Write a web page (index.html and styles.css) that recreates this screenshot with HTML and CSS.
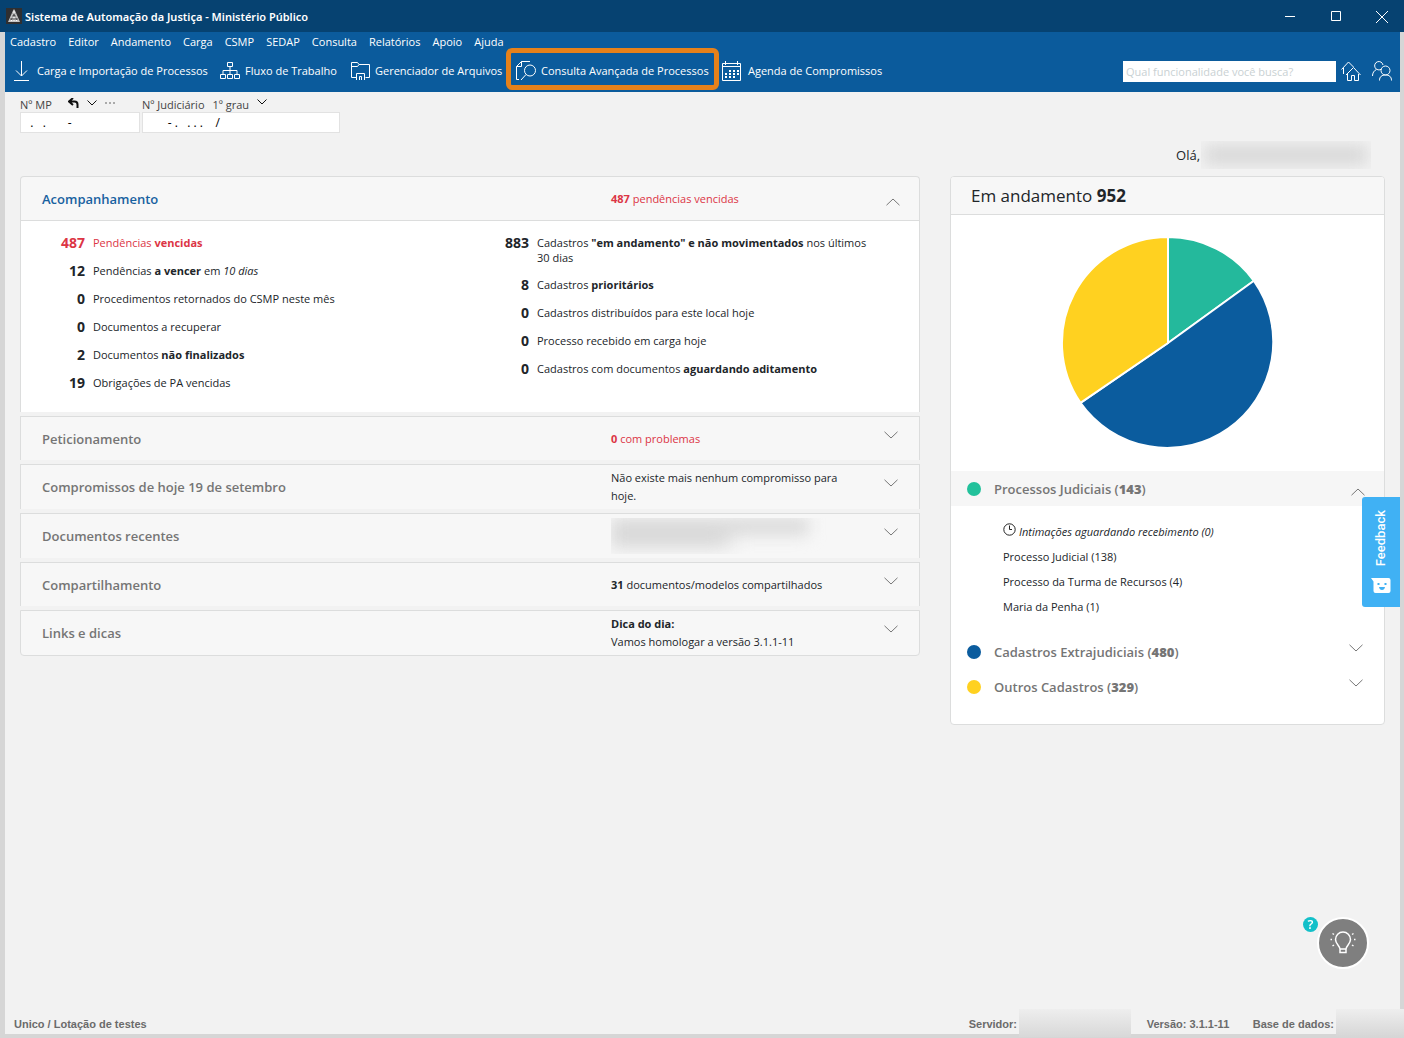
FILE: index.html
```html
<!DOCTYPE html>
<html lang="pt-BR">
<head>
<meta charset="utf-8">
<meta name="viewport" content="width=device-width, initial-scale=1">
<title>Sistema de Automação da Justiça - Ministério Público</title>
<link rel="stylesheet" href="styles.css">
</head>
<body>
<svg class="defs" aria-hidden="true">
  <symbol id="down" viewBox="0 0 14 8"><path d="M.5.8 7 7 13.500.8"/></symbol>
  <symbol id="up" viewBox="0 0 14 8"><path d="M.5 7.200 7 1l6.500 6.200"/></symbol>
</svg>

<header class="titlebar">
  <svg class="logo" viewBox="0 0 16 16" aria-hidden="true">
    <rect width="16" height="16" fill="#2f2f31"/>
    <path d="M7.500 1.500 2 14h12L8.500 1.500z" fill="#c4c4c4"/>
    <path d="M7 5l4 7M9 5l-4 7M6 8h4M4 11h8" stroke="#2f2f31" stroke-width=".7" fill="none"/>
    <path d="M8 3v3M7 8.500v1.500M9 8.500v1.500M5 12.500h1M10 12.500h1M7.500 12.500h1" stroke="#fff" fill="none"/>
  </svg>
  <h1 class="app-name">Sistema de Automação da Justiça - Ministério Público</h1>
  <div class="window-buttons">
    <button type="button" aria-label="Minimizar"><svg viewBox="0 0 12 12"><path d="M1 6.500h10"/></svg></button>
    <button type="button" aria-label="Maximizar"><svg viewBox="0 0 12 12"><path d="M1.500 1.500h9v9h-9z"/></svg></button>
    <button type="button" aria-label="Fechar"><svg viewBox="0 0 12 12"><path d="m0 1 12 12M12 1 0 13"/></svg></button>
  </div>
</header>

<div class="frame">
  <div class="ribbon">
    <nav class="menu" aria-label="Menu principal">
      <a href="#">Cadastro</a><a href="#">Editor</a><a href="#">Andamento</a><a href="#">Carga</a><a href="#">CSMP</a><a href="#">SEDAP</a><a href="#">Consulta</a><a href="#">Relatórios</a><a href="#">Apoio</a><a href="#">Ajuda</a>
    </nav>
    <div class="toolbar">
      <div class="tools">
        <button type="button" class="tool"><svg width="16" height="20" viewBox="0 0 16 20"><path d="M7.500 0v15M2 9.500 7.500 15 13 9.500M0 19.500h15"/></svg><span>Carga e Importação de Processos</span></button>
        <button type="button" class="tool tool-tight"><svg width="20" height="18" viewBox="0 0 20 18"><path d="M7.500.5h5v4h-5zM.5 12.500h5v4h-5zM7.500 12.500h5v4h-5zM14.500 12.500h5v4h-5zM10 4.500v8M3 12.500v-4h14v4"/></svg><span>Fluxo de Trabalho</span></button>
        <button type="button" class="tool tool-tight"><svg width="19" height="19" viewBox="0 0 19 19"><path d="M5.500 15.500h-5V.5h6l1.500 2h10.500v13h-4M.5 4.500h6l1.500-2M5.500 18V11.500h8V18M8.500 18v-3.500h2V18"/></svg><span>Gerenciador de Arquivos</span></button>
        <button type="button" class="tool tool-marked"><svg width="21" height="20" viewBox="0 0 21 20"><path d="M3 18.500H.500V5.500l5-5H14M5.500.5v5h-5"/><circle cx="14" cy="9.500" r="5.500"/><path d="m10 13.500-5 5.500"/></svg><span>Consulta Avançada de Processos</span></button>
        <button type="button" class="tool"><svg width="19" height="20" viewBox="0 0 19 20"><path d="M.5 2.500h18v17H.500zM.5 5.500h18M3.500 0v4M15.500 0v4"/><path d="M7 10h10M3 13h14M3 16h10" stroke-width="2" stroke-dasharray="2 2"/></svg><span>Agenda de Compromissos</span></button>
      </div>
      <div class="search">
        <input type="search" aria-label="Buscar funcionalidade" placeholder="Qual funcionalidade você busca?">
        <button type="button" aria-label="Início"><svg width="20" height="20" viewBox="0 0 20 20"><path d="M2.500 13V7M.5 8.500l7-7.500 5 5M5 14l7.500-7.500 7 7.500M6.500 13v6.500h4v-5h3v5h4V13"/></svg></button>
        <button type="button" aria-label="Usuários"><svg width="20" height="20" viewBox="0 0 20 20"><path d="M9.500 8A4.200 4.200 0 1 1 11 4M.5 15c0-3 1.500-5.500 4-6.500M7.500 19.500c0-4 2.500-5.500 6-5.500s6 1.500 6 5.500"/><circle cx="13.500" cy="9.500" r="4.500"/></svg></button>
      </div>
    </div>
  </div>

  <main class="content">
    <form class="lookup">
      <div class="field field-mp">
        <div class="field-head">
          <label for="mp">Nº MP</label>
          <span class="field-tools">
            <svg width="11" height="10" viewBox="0 0 11 10" class="ink heavy"><path d="M5 0 1 3.500 5 7M1 3.500h5.500q3 0 3 3V10"/></svg>
            <svg width="10" height="6" viewBox="0 0 10 6" class="ink"><path d="m.5.5 4.500 4.500L9.500.5"/></svg>
            <svg width="11" height="3" viewBox="0 0 11 3" fill="#aaa"><path d="M0 1h2v2H0zM4 1h2v2H4zM8 1h2v2H8z"/></svg>
          </span>
        </div>
        <input id="mp" type="text" value="  .   .       -">
      </div>
      <div class="field field-jud">
        <div class="field-head">
          <label for="jud">Nº Judiciário</label>
          <button type="button" class="degree">1º grau <svg width="10" height="6" viewBox="0 0 10 6" class="ink"><path d="m.5.5 4.500 4.500L9.500.5"/></svg></button>
        </div>
        <input id="jud" type="text" value="       - .   . . .    /">
      </div>
    </form>

    <p class="greeting">Olá,<span class="redacted redacted-name"></span></p>

    <div class="panels">
      <div class="accordion">
        <section class="item open">
          <header class="item-head">
            <h2>Acompanhamento</h2>
            <p class="alert"><b>487</b> pendências vencidas</p>
            <button type="button" class="toggle" aria-label="Recolher"><svg><use href="#up"/></svg></button>
          </header>
          <div class="item-body">
            <ul class="counts">
              <li class="alert"><b class="num">487</b><span>Pendências <b>vencidas</b></span></li>
              <li><b class="num">12</b><span>Pendências <b>a vencer</b> em <i>10 dias</i></span></li>
              <li><b class="num">0</b><span>Procedimentos retornados do CSMP neste mês</span></li>
              <li><b class="num">0</b><span>Documentos a recuperar</span></li>
              <li><b class="num">2</b><span>Documentos <b>não finalizados</b></span></li>
              <li><b class="num">19</b><span>Obrigações de PA vencidas</span></li>
            </ul>
            <ul class="counts">
              <li><b class="num">883</b><span>Cadastros <b>"em andamento" e não movimentados</b> nos últimos 30 dias</span></li>
              <li><b class="num">8</b><span>Cadastros <b>prioritários</b></span></li>
              <li><b class="num">0</b><span>Cadastros distribuídos para este local hoje</span></li>
              <li><b class="num">0</b><span>Processo recebido em carga hoje</span></li>
              <li><b class="num">0</b><span>Cadastros com documentos <b>aguardando aditamento</b></span></li>
            </ul>
          </div>
        </section>
        <section class="item"><header class="item-head">
          <h2>Peticionamento</h2><p class="alert"><b>0</b> com problemas</p>
          <button type="button" class="toggle" aria-label="Expandir"><svg><use href="#down"/></svg></button>
        </header></section>
        <section class="item"><header class="item-head">
          <h2>Compromissos de hoje 19 de setembro</h2><p>Não existe mais nenhum compromisso para hoje.</p>
          <button type="button" class="toggle" aria-label="Expandir"><svg><use href="#down"/></svg></button>
        </header></section>
        <section class="item"><header class="item-head">
          <h2>Documentos recentes</h2><p><span class="redacted redacted-docs"></span></p>
          <button type="button" class="toggle" aria-label="Expandir"><svg><use href="#down"/></svg></button>
        </header></section>
        <section class="item"><header class="item-head">
          <h2>Compartilhamento</h2><p><b>31</b> documentos/modelos compartilhados</p>
          <button type="button" class="toggle" aria-label="Expandir"><svg><use href="#down"/></svg></button>
        </header></section>
        <section class="item"><header class="item-head">
          <h2>Links e dicas</h2><p><b>Dica do dia:</b><br>Vamos homologar a versão 3.1.1-11</p>
          <button type="button" class="toggle" aria-label="Expandir"><svg><use href="#down"/></svg></button>
        </header></section>
      </div>

      <aside class="progress">
        <h2>Em andamento <b>952</b></h2>
        <svg class="pie" viewBox="-107 -107 214 214" role="img" aria-label="Distribuição dos cadastros em andamento">
          <path fill="#24b99c" d="M0 0V-106A106 106 0 0 1 85.900-62.200z"/>
          <path fill="#0b5c9e" d="M0 0 85.900-62.200A106 106 0 1 1-87.500 59.900z"/>
          <path fill="#ffd120" d="M0 0-87.500 59.900A106 106 0 0 1 0-106z"/>
        </svg>
        <section class="group open">
          <h3 class="green">Processos Judiciais (<b>143</b>)</h3>
          <button type="button" class="toggle" aria-label="Recolher"><svg><use href="#up"/></svg></button>
        </section>
        <ul class="links">
          <li><a href="#"><svg class="clock" viewBox="0 0 13 13"><circle cx="6.500" cy="6.500" r="5.700"/><path d="M6.500 2.500v4H9"/></svg><i>Intimações aguardando recebimento (0)</i></a></li>
          <li><a href="#">Processo Judicial (138)</a></li>
          <li><a href="#">Processo da Turma de Recursos (4)</a></li>
          <li><a href="#">Maria da Penha (1)</a></li>
        </ul>
        <section class="group">
          <h3 class="blue">Cadastros Extrajudiciais (<b>480</b>)</h3>
          <button type="button" class="toggle" aria-label="Expandir"><svg><use href="#down"/></svg></button>
        </section>
        <section class="group">
          <h3 class="yellow">Outros Cadastros (<b>329</b>)</h3>
          <button type="button" class="toggle" aria-label="Expandir"><svg><use href="#down"/></svg></button>
        </section>
      </aside>
    </div>
  </main>

  <footer class="status">
    <span class="unit">Unico / Lotação de testes</span>
    <span class="server">Servidor:<span class="redacted redacted-server"></span></span>
    <span class="version">Versão: 3.1.1-11</span>
    <span>Base de dados:<span class="redacted redacted-db"></span></span>
  </footer>
</div>

<button type="button" class="feedback"><span>Feedback</span>
  <svg width="20" height="15" viewBox="0 0 20 15"><path fill="#fff" d="M0 0h17.500q2 0 2 2v11q0 2-2 2h-13q-2 0-2-2V3.500z"/><path fill="#40b1f4" d="M6.500 5h2v2h-2zM13.500 5h2v2h-2zM8 9h6q-.5 3-3 3t-3-3z"/></svg>
</button>
<div class="tips">
  <button type="button" class="bulb" aria-label="Dicas"><svg width="26" height="26" viewBox="0 0 26 26"><path d="M10 19c0-3-4.500-5-4.500-9.500a7.500 7.500 0 0 1 15 0c0 4.500-4.500 6.500-4.500 9.500zM10 19v3.500h6V19"/><path d="M2.500 3.500 4 4.500M.500 9.500H2M2.500 16 4 15M23.500 3.500 22 4.500M25.500 9.500H24M23.500 16 22 15"/></svg></button>
  <span class="help">?</span>
</div>
</body>
</html>
```
FILE: styles.css
```css
* { box-sizing: border-box; }

body {
  margin: 0;
  min-height: 100vh;
  display: flex;
  flex-direction: column;
  font: 11px/18px "Open Sans", "Noto Sans", sans-serif;
  color: #212529;
  background: #f2f2f2;
}

h1, h2, h3, p, ul { margin: 0; padding: 0; }
ul { list-style: none; }
a { color: inherit; text-decoration: none; }
button { font: inherit; color: inherit; background: none; border: 0; padding: 0; cursor: pointer; }
svg { display: block; flex: none; }
.defs { position: absolute; width: 0; height: 0; }

/* Title bar */
.titlebar {
  display: flex;
  align-items: center;
  height: 32px;
  padding: 0 16px 0 6px;
  gap: 3px;
  background: #064271;
  color: #fff;
}
.logo { width: 16px; height: 16px; }
.app-name { flex: 1; font: 600 11px/18px "Noto Sans", sans-serif; padding-top: 2px; }
.window-buttons { display: flex; gap: 34px; }
.window-buttons svg { width: 12px; height: 12px; fill: none; stroke: #fff; overflow: visible; }

.frame {
  flex: 1;
  display: flex;
  flex-direction: column;
  border: solid #d6d6d6;
  border-width: 0 4px 4px 5px;
}

/* Menu and toolbar */
.ribbon { height: 60px; background: #0b5b9c; color: #fff; }
.menu { display: flex; gap: 12px; padding: 0 5px; line-height: 20px; }
.toolbar { display: flex; justify-content: space-between; align-items: center; height: 38px; padding: 0 8px 0 9px; }
.tools { display: grid; grid-template-columns: 206px 131px 165px 206px auto; }
.tool { position: relative; display: flex; align-items: center; gap: 7px; white-space: nowrap; }
.tool-tight { gap: 5px; }
.tool svg, .search svg { fill: none; stroke: #fff; }
.tool-marked { gap: 4px; }
.tool-marked::after {
  content: "";
  position: absolute;
  inset: -13px 3px -9px -10px;
  border: 5px solid #e5811b;
  border-radius: 6px;
}
.search { display: flex; align-items: center; gap: 11px; }
.search input {
  width: 213px;
  height: 21px;
  margin-right: -6px;
  padding: 0 3px;
  border: 0;
  font: 11px/21px "Open Sans", sans-serif;
}
.search input::placeholder { color: #c9d1d3; opacity: 1; }

/* Case number lookup */
.content { flex: 1; padding: 4px 15px 0; }
.lookup { display: flex; gap: 2px; }
.field-head { display: flex; align-items: center; height: 16px; color: #444; }
.field-head label, .degree { line-height: 16px; padding-top: 2px; }
.field-mp { width: 120px; }
.field-jud { width: 198px; }
.field-tools { display: flex; align-items: center; gap: 8px; margin: 0 0 3px 16px; }
.ink { fill: none; stroke: #111; }
.heavy { stroke-width: 2px; }
.degree { display: flex; align-items: center; gap: 8px; margin-left: 8px; }
.degree svg { margin-bottom: 6px; }
.field input {
  width: 100%;
  height: 21px;
  padding: 0 3px;
  border: 1px solid #e2e2e2;
  background: #fff;
  font: 12px/19px "Open Sans", sans-serif;
  white-space: pre;
}

.greeting { display: flex; justify-content: flex-end; align-items: center; height: 43px; padding-right: 14px; font-size: 13px; }

/* Obscured personal data */
.redacted { display: block; overflow: hidden; }
.redacted::before { content: ""; display: block; height: 100%; filter: blur(8px); }
.redacted-name { width: 170px; height: 28px; margin-left: 1px; padding: 5px 4px; }
.redacted-name::before { background: #d6d6d6; }
.redacted-docs { width: 220px; height: 36px; padding: 0 22px 0 0; }
.redacted-docs::before { background: linear-gradient(#d9d9d9, #d9d9d9) 0 0 / 100% 17px no-repeat, linear-gradient(90deg, #d9d9d9 55%, transparent 65%); height: 30px; }
.redacted-server, .redacted-db { position: absolute; top: -5px; height: 28px; }
.redacted-server { left: 50px; width: 112px; background: linear-gradient(#eee, #d8d8d8); }
.redacted-db { left: 83px; width: 68px; background: linear-gradient(#eee, #d6d6d6); }

/* Panels */
.panels { display: grid; grid-template-columns: 60fr 29fr; gap: 30px; align-items: start; padding-bottom: 16px; }
.accordion { display: flex; flex-direction: column; gap: 4px; }
.item { border: solid #dcdddd; border-width: 1px 1px 0; background: #f7f7f7; }
.item:first-child { border-radius: 4px 4px 0 0; }
.item:last-child { border-bottom-width: 1px; border-radius: 0 0 4px 4px; }
.item-head {
  display: grid;
  grid-template-columns: 1fr 273px 14px;
  align-items: center;
  min-height: 43px;
  padding: 4px 21px;
}
.item-head h2 { font-size: 13px; font-weight: 600; color: #757575; }
.item-head p { padding-right: 33px; }
.item.open h2 { color: #1761a0; }
.item-head p.alert, .alert { color: #dc3545; }
.toggle { align-self: start; margin-top: 10px; }
.toggle svg { width: 14px; height: 8px; fill: none; stroke: #777; }
.open .toggle { margin: 17px 0 0 2px; }
.item-body {
  display: grid;
  grid-template-columns: 444px 1fr;
  padding: 14px 40px 21px 33px;
  border-top: 1px solid #dcdddd;
  background: #fff;
}
.counts { display: flex; flex-direction: column; gap: 12px; line-height: 15px; }
.counts li { display: grid; grid-template-columns: 31px 1fr; gap: 8px; }
.num { font-size: 14px; line-height: 16px; text-align: right; }

.progress { border: 1px solid #dcdddd; border-radius: 4px; background: #fff; padding-bottom: 20px; overflow: hidden; }
.progress h2 {
  padding: 0 20px;
  font-size: 17px;
  font-weight: 400;
  line-height: 37px;
  background: #f7f7f7;
  border-bottom: 1px solid #dcdddd;
}
.pie { width: 214px; height: 214px; margin: 21px auto; }
.pie path { stroke: #fff; stroke-width: 2px; }
.group { display: flex; align-items: center; justify-content: space-between; height: 35px; padding: 0 21px 0 16px; }
.group.open { background: #f6f6f6; padding-right: 19px; }
.group h3 { display: flex; align-items: center; font-size: 13px; font-weight: 600; color: #757575; }
.group h3 b { font-weight: 800; }
.group h3::before { content: ""; width: 14px; height: 14px; margin-right: 13px; border-radius: 50%; }
.green::before { background: #22c19b; }
.blue::before { background: #0b5c9e; }
.yellow::before { background: #ffd120; }
.links { padding: 13px 20px 15px 52px; line-height: 25px; }
.links a { display: flex; gap: 3px; }
.clock { width: 13px; height: 13px; margin-top: 4px; fill: none; stroke: #222; }

/* Status bar */
.status { display: flex; height: 20px; padding: 0 66px 0 9px; font: bold 11px/20px "Liberation Sans", Arial, sans-serif; color: #6b6b6b; }
.status > span { position: relative; white-space: nowrap; }
.unit { flex: 1; }
.server { width: 178px; }
.version { width: 106px; }

/* Floating controls */
.feedback {
  position: fixed;
  right: 4px;
  top: 497px;
  width: 38px;
  height: 110px;
  display: flex;
  flex-direction: column;
  align-items: center;
  gap: 12px;
  padding-top: 13px;
  border-radius: 3px 0 0 3px;
  background: #40b1f4;
  color: #fff;
}
.feedback span { writing-mode: vertical-rl; transform: rotate(180deg); font: 500 13px/18px Roboto, sans-serif; }
.tips { position: fixed; right: 35px; bottom: 69px; }
.bulb { display: grid; place-items: center; width: 52px; height: 52px; border: 2px solid #fff; border-radius: 50%; background: #7f7f7f; }
.bulb svg { fill: none; stroke: #fff; stroke-width: 1.500px; }
.help {
  position: absolute;
  left: -14px;
  top: 0;
  width: 15px;
  height: 15px;
  border-radius: 50%;
  background: #13c0c9;
  color: #fff;
  font-size: 13px;
  font-weight: 600;
  line-height: 15px;
  text-align: center;
}
```
